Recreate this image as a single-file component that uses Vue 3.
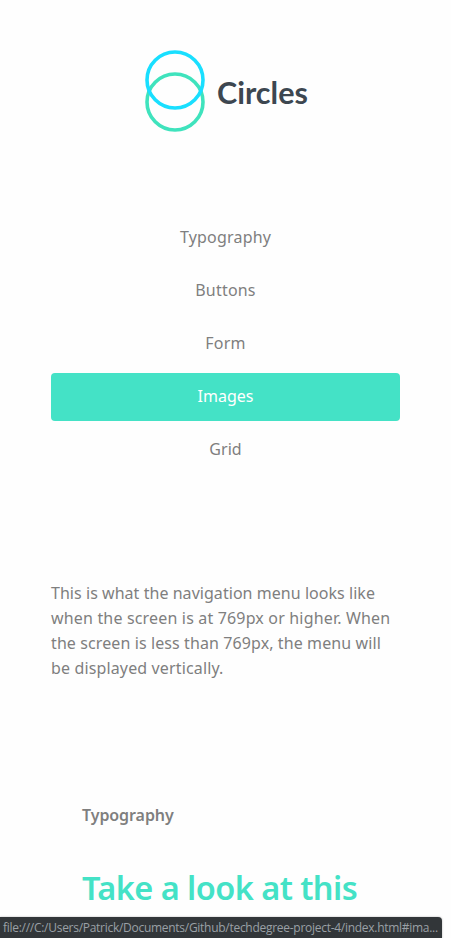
<script setup>
const links = [
  { name: 'Typography', spacing: 0.2 },
  { name: 'Buttons', spacing: 0.2 },
  { name: 'Form', spacing: 0.25 },
  { name: 'Images', spacing: 0, active: true },
  { name: 'Grid', spacing: 0.1 },
]
const intro = [
  { text: 'This is what the navigation menu looks like', spacing: 0.045 },
  { text: 'when the screen is at 769px or higher. When', spacing: 0.17 },
  { text: 'the screen is less than 769px, the menu will', spacing: 0.1 },
  { text: 'be displayed vertically.', spacing: 0.14 },
]
</script>

<template>
  <div class="page">
    <header class="brand">
      <svg class="mark" viewBox="0 0 60 82" width="60" height="82" fill="none" stroke-width="3.6">
        <circle cx="30" cy="52" r="28" stroke="#3fe3bd" />
        <circle cx="30" cy="30" r="28" stroke="#19dfff" />
      </svg>
      <span class="brand-name">Circles</span>
    </header>
    <nav class="menu">
      <a
        v-for="link in links"
        :key="link.name"
        class="link"
        :class="{ active: link.active }"
        :style="{ letterSpacing: link.spacing + 'px' }"
      >{{ link.name }}</a>
    </nav>
    <p class="intro">
      <span
        v-for="line in intro"
        :key="line.text"
        class="line"
        :style="{ letterSpacing: line.spacing + 'px' }"
      >{{ line.text }}</span>
    </p>
    <section class="typography">
      <h3 class="label">Typography</h3>
      <h1 class="title">Take a look at this</h1>
    </section>
    <div class="status">file:///C:/Users/Patrick/Documents/Github/techdegree-project-4/index.html#ima...</div>
  </div>
</template>

<style>
body { background: #fefefe; overflow: hidden; }
</style>

<style scoped>
.page {
  position: relative;
  box-sizing: border-box;
  height: 938px;
  padding: 50px 51px 0;
  overflow: hidden;
  color: #7f7f7f;
  font-family: "Noto Sans", sans-serif;
  font-size: 16px;
}
.brand { display: flex; height: 82px; padding-left: 94px; }
.mark { flex: none; }
.brand-name {
  margin-left: 12px;
  padding-top: 23px;
  color: #3d4750;
  font: bold 30.5px/38px Lato, sans-serif;
}
.menu { display: flex; flex-direction: column; gap: 5px; margin-top: 82px; }
.link { height: 48px; border-radius: 4px; line-height: 47px; text-align: center; }
.link.active { background: #44e2c6; color: #fff; }
.intro { margin: 107px 0 0; }
.line { display: block; line-height: 25px; white-space: nowrap; }
.typography { padding: 120px 31px 0; white-space: nowrap; }
.label { margin: 0; font-size: 16px; line-height: 28px; font-weight: 600; letter-spacing: -0.08px; }
.title {
  margin: 36px 0 0;
  color: #44e2c6;
  font-size: 32.5px;
  line-height: 46px;
  font-weight: 600;
  letter-spacing: -0.55px;
}
.status {
  position: absolute;
  left: 0;
  bottom: 0;
  box-sizing: border-box;
  width: 442px;
  height: 21px;
  padding-left: 3px;
  border-radius: 0 4px 0 0;
  background: #323639;
  box-shadow: 0 0 2px #aaa;
  color: #9aa0a6;
  font-family: "Open Sans", sans-serif;
  font-size: 12px;
  letter-spacing: -0.28px;
  line-height: 21px;
  white-space: nowrap;
}
</style>
